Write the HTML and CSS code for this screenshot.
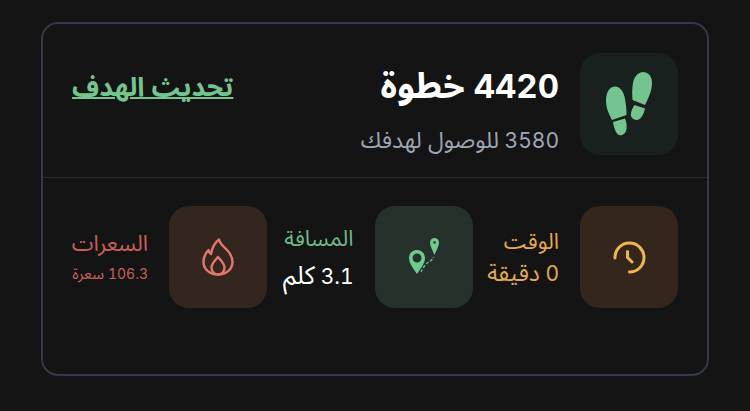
FILE: index.html
```html
<!DOCTYPE html>
<html lang="ar" dir="rtl">
<head>
<meta charset="utf-8">
<title>الخطوات</title>
<link rel="stylesheet" href="styles.css">
</head>
<body>
<section class="card">
  <div class="top">
    <div class="tile tile-steps">
      <svg class="ico-steps" viewBox="0 0 48 64" aria-hidden="true">
        <g fill="#74c48f">
          <path d="M38 0C44 0 47 5 47 11 47 19 43 27 40 33L27.500 28C27 22 27 16 28 11 29 5 33 0 38 0z"/>
          <path d="M29.500 33L40 36.500C39 41 37 47 32 48 27 48 25 44 26 41 26.500 38 28 35 29.500 33z"/>
          <path d="M9.500 14.500C15 14 19 20 20 27 21 32 21.500 38 21.500 43L7 48C4 42 1 36 1 29 1 21 4 15 9.500 14.500z"/>
          <path d="M8 50L20 46.500C21.500 50 22 54 21.500 57 20.500 62 17 64 14 63 11 62 9 56 8 50z"/>
        </g>
      </svg>
    </div>
    <div class="summary">
      <h1 class="steps">4420 <span class="ar">خطوة</span></h1>
      <p class="remain">3580 <span class="ar">للوصول لهدفك</span></p>
    </div>
    <a class="update" href="#">تحديث الهدف</a>
  </div>
  <div class="stats">
    <div class="stat">
      <div class="tile tile-time">
        <svg class="ico" viewBox="0 0 36 38" fill="none" stroke="#efb54e" stroke-width="3" stroke-linecap="round" aria-hidden="true">
          <path d="M4 20A14.500 14.500 0 1 1 18.500 34"/>
          <path d="M16.500 13.500v6l4.500 4.500"/>
        </svg>
      </div>
      <div class="txt time">
        <div class="label">الوقت</div>
        <div class="val">0 <span class="ar">دقيقة</span></div>
      </div>
    </div>
    <div class="stat">
      <div class="tile tile-dist">
        <svg class="ico" viewBox="0 0 36 38" aria-hidden="true">
          <path fill="#6fcb8e" fill-rule="evenodd" d="M11 12C6.500 12 3 15.500 3 20c0 5 4.500 11 8 16 3.500-5 8-11 8-16 0-4.500-3.500-8-8-8zm0 3.500a4.500 4.500 0 1 1 0 9 4.500 4.500 0 0 1 0-9z"/>
          <path fill="#6fcb8e" fill-rule="evenodd" d="M28.500 0C26 0 24 2 24 4.500c0 3 2.500 8 4.500 12.500 2-4.500 4.500-9.500 4.500-12.500C33 2 31 0 28.500 0zm0 3.200a1.300 1.300 0 1 1 0 2.600 1.300 1.300 0 0 1 0-2.600z"/>
          <path fill="none" stroke="#6fcb8e" stroke-width="1.300" stroke-dasharray="3 1.800" d="M15 34c1.500-3 4-8 7-9.500 2-1 4-2 5.500-5.500"/>
        </svg>
      </div>
      <div class="txt dist">
        <div class="label">المسافة</div>
        <div class="val">3.1 <span class="ar">كلم</span></div>
      </div>
    </div>
    <div class="stat">
      <div class="tile tile-cal">
        <svg class="ico" viewBox="0 0 36 38" fill="none" stroke="#e5766c" stroke-width="2.400" stroke-linejoin="round" aria-hidden="true">
          <path d="M19 1.500c1 5 5 7 8.500 11 3.500 4 5 7.500 5 11.500 0 7-6 12.500-14.500 12.500S3.500 31 3.500 24c0-5 2-9 5-12 .5 2 1 3 2.500 4C12 10 15 4.500 19 1.500z"/>
          <path d="M18 19c2.500 3 6.500 6.500 6.500 10.500 0 4-3 7-6.500 7s-6.500-3-6.500-7c0-4 4-7.500 6.500-10.500z"/>
        </svg>
      </div>
      <div class="txt cal">
        <div class="label">السعرات</div>
        <div class="val-small">106.3 <span class="ar">سعرة</span></div>
      </div>
    </div>
  </div>
</section>
</body>
</html>
```
FILE: styles.css
```css
* { box-sizing: border-box; }
html, body { margin: 0; height: 411px; overflow: hidden; }
body {
  background: #141414;
  padding: 22px 41px 35px;
  font-family: Inter, "Noto Sans", "Noto Sans Arabic", "DejaVu Sans", sans-serif;
  font-variant-numeric: tabular-nums;
}
.card {
  height: 354px;
  border: 2px solid #323949;
  border-radius: 17px;
}
.top {
  display: flex;
  padding: 29px 29px 22px;
  height: 154px;
  border-bottom: 1px solid #2a2a2c;
}
.tile {
  flex: none;
  width: 98px;
  height: 102px;
  border-radius: 20px;
  display: flex;
  align-items: center;
  justify-content: center;
}
.tile-steps { background: #18211d; }
.tile-time { background: #35261d; }
.tile-dist { background: #26312c; }
.tile-cal { background: #33261f; }
.ico-steps { width: 48px; height: 64px; }
.ico { width: 36px; height: 38px; }
.ar { font-size: 1.1em; }
.steps .ar { font-size: 1.07em; }
.remain .ar { font-size: 1.09em; }
.dist .val .ar { font-size: 1.2em; }
.summary { margin-right: 21px; flex: 1; padding-top: 12px; }
.steps {
  margin: 0;
  font-size: 33px;
  line-height: 42px;
  font-weight: 700;
  color: #fff;
}
.remain {
  margin: 19px 0 0;
  font-size: 21px;
  line-height: 28px;
  color: #9ea6b7;
}
.update {
  align-self: flex-start;
  margin-top: 15px;
  font-size: 26.500px;
  line-height: 36px;
  font-weight: 700;
  color: #74c48f;
  text-decoration: underline;
  text-decoration-thickness: 2px;
}
.stats {
  display: grid;
  grid-template-columns: repeat(3, 205.5px);
  padding: 28px 29px 0;
}
.stat { display: flex; align-items: center; gap: 21px; }
.txt { white-space: nowrap; }
.label { font-size: 22px; line-height: 30px; }
.val { font-size: 21px; line-height: 30px; margin-top: 2px; }
.val-small { font-size: 14px; line-height: 24px; margin-top: 4px; }
.time { color: #e2a951; }
.dist .label { color: #6fb98a; }
.dist .val { color: #fff; margin-top: 7px; }
.cal { color: #c9605a; }
```
